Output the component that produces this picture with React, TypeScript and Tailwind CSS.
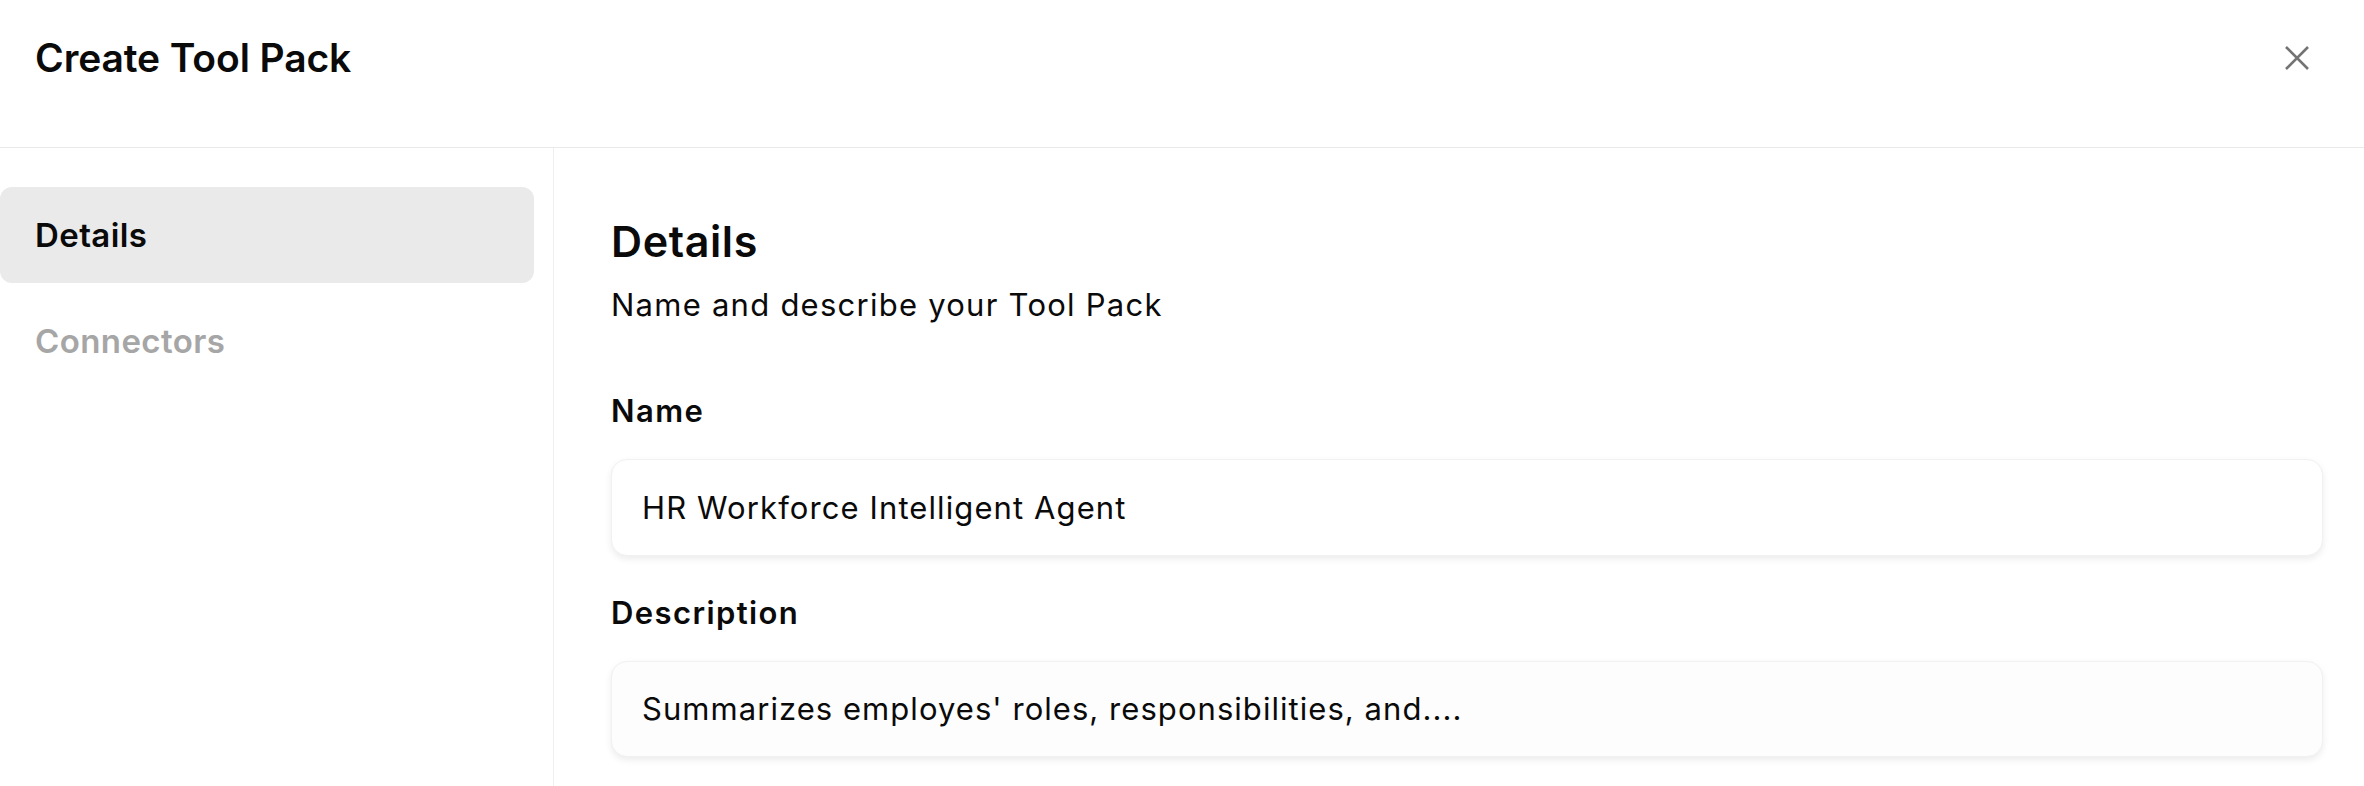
import React from "react";

function CloseIcon() {
  return (
    <svg width="24" height="24" viewBox="0 0 24 24" fill="none" className="block">
      <path d="M1 1L23 23M23 1L1 23" stroke="#737373" strokeWidth="2.6" strokeLinecap="butt" />
    </svg>
  );
}

export default function App() {
  return (
    <div
      className="flex h-[786px] w-full flex-col overflow-hidden bg-white text-[#0a0a0a]"
      style={{ fontFamily: "Inter, 'Noto Sans', sans-serif" }}
    >
      <header className="flex h-[148px] shrink-0 items-start border-b border-[#e9e9e9] pl-[35px] pr-[55px] pt-[34px]">
        <h1 className="text-[39px] font-semibold leading-[48px] tracking-[-0.1px]">Create Tool Pack</h1>
        <button className="ml-auto mt-[12px]" aria-label="Close">
          <CloseIcon />
        </button>
      </header>
      <div className="flex min-h-0 flex-1">
        <aside className="flex w-[554px] shrink-0 flex-col gap-[10px] border-r border-[#efefef] pr-[19px] pt-[39px]">
          <div className="flex h-[96px] items-center rounded-[12px] bg-[#eaeaea] pl-[35px] text-[33px] font-semibold leading-[40px] tracking-[0.4px]">
            Details
          </div>
          <div className="flex h-[96px] items-center rounded-[12px] pl-[35px] text-[33px] font-semibold leading-[40px] tracking-[0.4px] text-[#a6a6a6]">
            Connectors
          </div>
        </aside>
        <main className="flex min-w-0 flex-1 flex-col pl-[57px] pr-[41px] pt-[68px]">
          <h2 className="text-[43px] font-semibold leading-[50px] tracking-[0.6px]">Details</h2>
          <p className="mt-[21px] text-[31px] leading-[36px] tracking-[1.25px]">Name and describe your Tool Pack</p>
          <label className="mt-[70px] text-[31px] font-semibold leading-[36px] tracking-[1.4px]">Name</label>
          <div className="mt-[30px] flex h-[97px] shrink-0 items-center rounded-[16px] border border-[#f1f1f1] bg-white pl-[30px] text-[31px] leading-[38px] tracking-[1.1px] shadow-[0_3px_7px_rgba(0,0,0,0.08)]">
            HR Workforce Intelligent Agent
          </div>
          <label className="mt-[39px] text-[31px] font-semibold leading-[36px] tracking-[1.4px]">Description</label>
          <div className="mt-[30px] flex h-[96px] shrink-0 items-center rounded-[16px] border border-[#f1f1f1] bg-[#fdfdfd] pl-[30px] text-[31px] leading-[38px] tracking-[1.05px] shadow-[0_3px_7px_rgba(0,0,0,0.08)]">
            Summarizes employes' roles, responsibilities, and....
          </div>
        </main>
      </div>
    </div>
  );
}
